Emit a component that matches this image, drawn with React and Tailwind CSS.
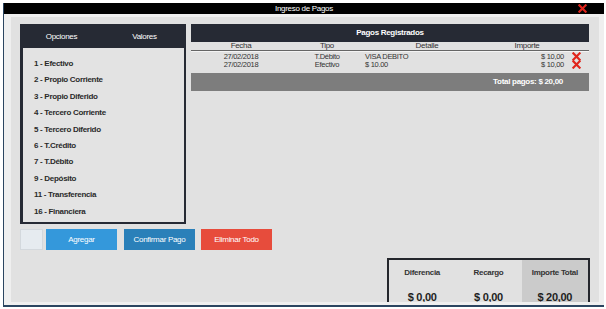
import React from "react";

function RedX({ size = 9 }) {
  return (
    <svg width={size} height={size} viewBox="0 0 10 10" className="block">
      <path d="M1.5 1.5 L8.5 8.5 M8.5 1.5 L1.5 8.5" stroke="#e0251c" strokeWidth="2.4" strokeLinecap="square" />
    </svg>
  );
}

const opciones = [
  "1 - Efectivo",
  "2 - Propio Corriente",
  "3 - Propio Diferido",
  "4 - Tercero Corriente",
  "5 - Tercero Diferido",
  "6 - T.Crédito",
  "7 - T.Débito",
  "9 - Depósito",
  "11 - Transferencia",
  "16 - Financiera",
];

const pagos = [
  { fecha: "27/02/2018", tipo: "T.Débito", detalle: "VISA DEBITO", importe: "$ 10,00" },
  { fecha: "27/02/2018", tipo: "Efectivo", detalle: "$ 10.00", importe: "$ 10,00" },
];

export default function App() {
  return (
    <div className="w-[606px] h-[309px] bg-white overflow-hidden font-['Liberation_Sans',Arial,sans-serif] tracking-[-0.3px]">
      <div className="ml-[3px] mt-[3px] w-[601px] h-[304px] border-l border-b-2 border-[#2b4560] bg-[#efefef] flex flex-col">
        {/* title bar */}
        <div className="h-[11px] shrink-0 bg-black relative flex items-center justify-center text-white text-[8px] leading-none">
          <span>Ingreso de Pagos</span>
          <div className="absolute right-[17px] top-[1px]">
            <RedX size={9} />
          </div>
        </div>
        {/* panel */}
        <div className="ml-[7px] mr-[5px] mt-[3px] h-[285px] shrink-0 bg-[#e1e1e1] flex flex-col overflow-hidden">
          <div className="flex shrink-0 items-start pt-[7px] pl-[9px] gap-[5px]">
            {/* left box */}
            <div className="w-[166px] h-[200px] bg-[#262a34] flex flex-col">
              <div className="h-[24px] flex items-center text-white text-[8px] pt-[1px]">
                <div className="w-1/2 text-center">Opciones</div>
                <div className="w-1/2 text-center">Valores</div>
              </div>
              <div className="flex-1 ml-[3px] mr-[2px] mb-[2px] bg-[#e3e3e3] pt-[8px] pl-[11px]">
                {opciones.map((o) => (
                  <div key={o} className="h-[16.4px] leading-[16.4px] text-[8px] font-bold text-[#2a2a2a]">
                    {o}
                  </div>
                ))}
              </div>
            </div>
            {/* right panel */}
            <div className="w-[398px] flex flex-col">
              <div className="h-[18px] bg-[#262a34] flex items-center justify-center text-white text-[8px] font-bold">
                Pagos Registrados
              </div>
              <div className="h-[8px] flex items-center text-[8px] leading-none text-[#333]">
                <div className="w-[100px] text-center">Fecha</div>
                <div className="w-[72px] text-center">Tipo</div>
                <div className="w-[128px] text-center">Detalle</div>
                <div className="w-[72px] text-center">Importe</div>
              </div>
              <div className="h-[1px] bg-[#666]" />
              <div className="h-[1px] bg-[#f4f4f4]" />
              <div>
                {pagos.map((p, i) => (
                  <div key={i} className="h-[8.5px] flex items-center text-[7.5px] leading-none text-[#333]">
                    <div className="w-[100px] text-center">{p.fecha}</div>
                    <div className="w-[72px] text-center">{p.tipo}</div>
                    <div className="w-[128px] pl-[2px]">{p.detalle}</div>
                    <div className="w-[73px] text-right">{p.importe}</div>
                    <div className="flex-1 flex justify-center pr-[1px]">
                      <RedX size={9} />
                    </div>
                  </div>
                ))}
              </div>
              <div className="mt-[4px] h-[18px] bg-[#7d7d7d] flex items-center justify-end pr-[26px] text-white text-[8px] font-bold">
                Total pagos: $ 20,00
              </div>
            </div>
          </div>
          {/* buttons */}
          <div className="flex shrink-0 mt-[5px] ml-[9px] h-[21px] text-white text-[8px]">
            <div className="w-[23px] bg-[#e6ebf0] border border-[#d3d8dd]" />
            <div className="ml-[3px] w-[71px] bg-[#3498db] flex items-center justify-center">Agregar</div>
            <div className="ml-[7px] w-[71px] bg-[#2a80b9] flex items-center justify-center">Confirmar Pago</div>
            <div className="ml-[6px] w-[71px] bg-[#e74c3c] flex items-center justify-center">Eliminar Todo</div>
          </div>
          {/* summary */}
          <div className="mt-[8px] shrink-0 self-end mr-[9px] w-[203px] h-[60px] border-t-2 border-x-2 border-[#24262c] flex">
            <div className="flex-1 flex flex-col items-center text-[#333]">
              <div className="mt-[7px] text-[8px] font-bold">Diferencia</div>
              <div className="mt-[10px] text-[11px] font-bold text-[#1e1e1e]">$ 0,00</div>
            </div>
            <div className="flex-1 flex flex-col items-center text-[#333]">
              <div className="mt-[7px] text-[8px] font-bold">Recargo</div>
              <div className="mt-[10px] text-[11px] font-bold text-[#1e1e1e]">$ 0,00</div>
            </div>
            <div className="flex-1 flex flex-col items-center bg-[#cbcbcb] text-[#333]">
              <div className="mt-[7px] text-[8px] font-bold">Importe Total</div>
              <div className="mt-[10px] text-[11px] font-bold text-[#1e1e1e]">$ 20,00</div>
            </div>
          </div>
        </div>
      </div>
    </div>
  );
}
